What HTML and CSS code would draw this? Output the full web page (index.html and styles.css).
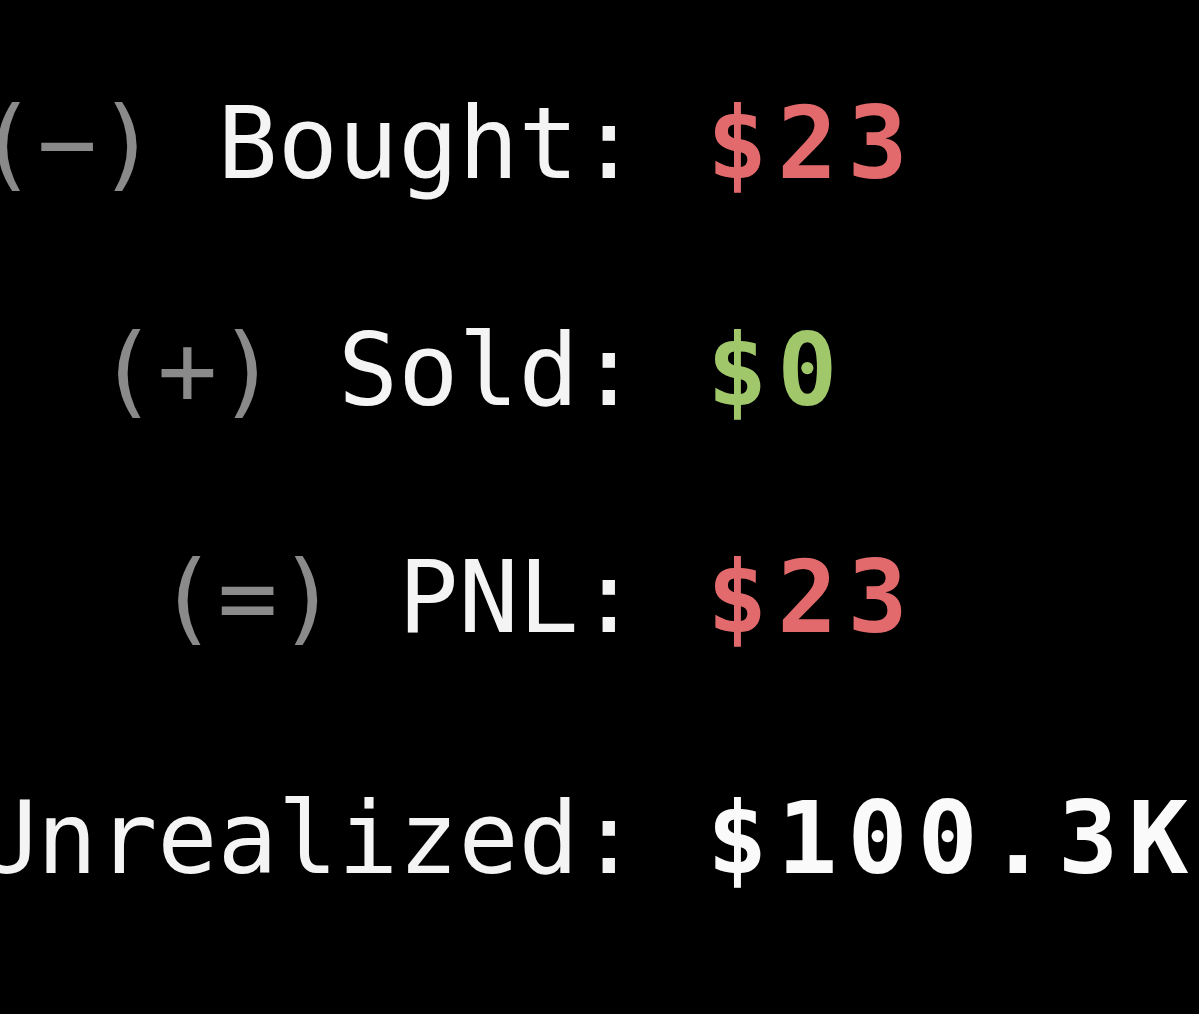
FILE: index.html
```html
<!DOCTYPE html>
<html>
<head>
<meta charset="utf-8">
<link rel="stylesheet" href="styles.css">
</head>
<body>
<div class="summary">
  <div class="row">
    <div class="label"><span class="op">(−)</span>&nbsp;Bought:</div>
    <div class="value loss">$23</div>
  </div>
  <div class="row">
    <div class="label"><span class="op">(+)</span>&nbsp;Sold:</div>
    <div class="value gain">$0</div>
  </div>
  <div class="row">
    <div class="label"><span class="op">(=)</span>&nbsp;PNL:</div>
    <div class="value loss">$23</div>
  </div>
  <div class="row total">
    <div class="label">Unrealized:</div>
    <div class="value plain">$100.3K</div>
  </div>
</div>
</body>
</html>
```

FILE: styles.css
```css
html, body {
  margin: 0;
  padding: 0;
  background: #000;
  overflow: hidden;
}
body {
  width: 1199px;
  height: 1014px;
  font-family: "DejaVu Sans Mono", "Liberation Mono", monospace;
  font-size: 100px;
  color: #f4f4f4;
}
.summary {
  padding-top: 30px;
  display: flex;
  flex-direction: column;
}
.row {
  display: flex;
  line-height: 227px;
  height: 227px;
  white-space: pre;
}
.row.total {
  margin-top: 14px;
}
.label {
  width: 639px;
  flex-shrink: 0;
  display: flex;
  justify-content: flex-end;
  white-space: pre;
}
.op {
  color: #8a8a8a;
}
.value {
  margin-left: 68px;
  font-weight: bold;
  letter-spacing: 10px;
}
.loss {
  color: #e36a6c;
}
.gain {
  color: #a0c86a;
}
.plain {
  color: #fafafa;
}
```
